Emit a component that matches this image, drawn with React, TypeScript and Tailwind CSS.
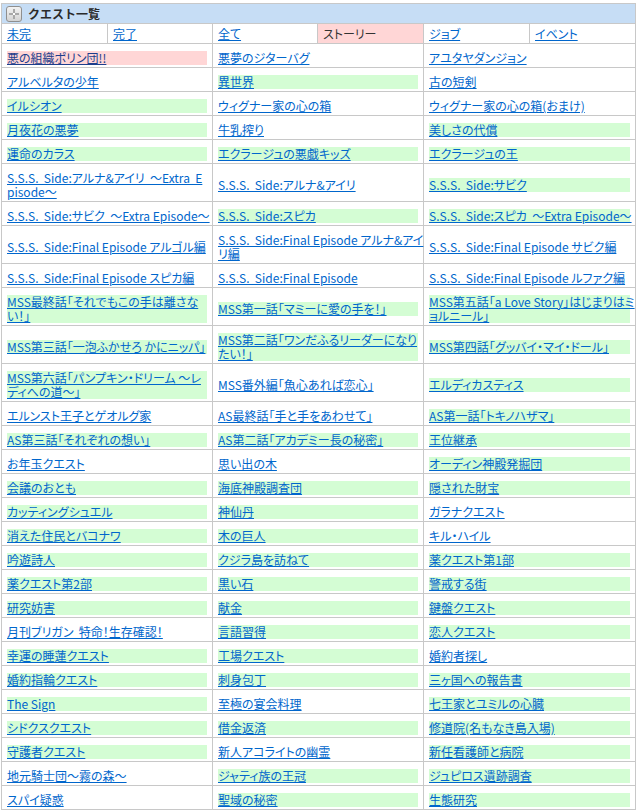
import React from "react";

type Cell = [string, "" | "g" | "p"];

const rows: Cell[][] = [
  [["悪の組織ポリン団!!", "p"], ["悪夢のジターバグ", ""], ["アユタヤダンジョン", ""]],
  [["アルベルタの少年", ""], ["異世界", "g"], ["古の短剣", ""]],
  [["イルシオン", "g"], ["ウィグナー家の心の箱", ""], ["ウィグナー家の心の箱(おまけ)", ""]],
  [["月夜花の悪夢", "g"], ["牛乳搾り", ""], ["美しさの代償", "g"]],
  [["運命のカラス", "g"], ["エクラージュの悪戯キッズ", "g"], ["エクラージュの王", "g"]],
  [["S.S.S.  Side:アルナ&アイリ  ～Extra  E\npisode～", ""], ["S.S.S.  Side:アルナ&アイリ", ""], ["S.S.S.  Side:サビク", "g"]],
  [["S.S.S.  Side:サビク  ～Extra Episode～", ""], ["S.S.S.  Side:スピカ", "g"], ["S.S.S.  Side:スピカ  ～Extra Episode～", "g"]],
  [["S.S.S.  Side:Final Episode アルゴル編", ""], ["S.S.S.  Side:Final Episode アルナ&アイ\nリ編", ""], ["S.S.S.  Side:Final Episode サビク編", ""]],
  [["S.S.S.  Side:Final Episode スピカ編", ""], ["S.S.S.  Side:Final Episode", ""], ["S.S.S.  Side:Final Episode ルファク編", ""]],
  [["MSS最終話「それでもこの手は離さな\nい！」", "g"], ["MSS第一話「マミーに愛の手を！」", "g"], ["MSS第五話「a Love Story」はじまりはミ\nョルニール」", "g"]],
  [["MSS第三話「一泡ふかせろ かにニッパ」", "g"], ["MSS第二話「ワンだふるリーダーになり\nたい！」", "g"], ["MSS第四話「グッバイ・マイ・ドール」", "g"]],
  [["MSS第六話「パンプキン・ドリーム ～レ\nディへの道～」", "g"], ["MSS番外編「魚心あれば恋心」", ""], ["エルディカスティス", "g"]],
  [["エルンスト王子とゲオルグ家", ""], ["AS最終話「手と手をあわせて」", ""], ["AS第一話「トキノハザマ」", "g"]],
  [["AS第三話「それぞれの想い」", "g"], ["AS第二話「アカデミー長の秘密」", "g"], ["王位継承", "g"]],
  [["お年玉クエスト", ""], ["思い出の木", ""], ["オーディン神殿発掘団", "g"]],
  [["会議のおとも", "g"], ["海底神殿調査団", "g"], ["隠された財宝", "g"]],
  [["カッティングシュエル", "g"], ["神仙丹", "g"], ["ガラナクエスト", ""]],
  [["消えた住民とバコナワ", "g"], ["木の巨人", "g"], ["キル・ハイル", ""]],
  [["吟遊詩人", "g"], ["クジラ島を訪ねて", "g"], ["薬クエスト第1部", "g"]],
  [["薬クエスト第2部", "g"], ["黒い石", "g"], ["警戒する街", "g"]],
  [["研究妨害", "g"], ["献金", "g"], ["鍵盤クエスト", "g"]],
  [["月刊ブリガン  特命！生存確認！", ""], ["言語習得", "g"], ["恋人クエスト", "g"]],
  [["幸運の睡蓮クエスト", "g"], ["工場クエスト", "g"], ["婚約者探し", ""]],
  [["婚約指輪クエスト", "g"], ["刺身包丁", "g"], ["三ヶ国への報告書", "g"]],
  [["The Sign", "g"], ["至極の宴会料理", ""], ["七王家とユミルの心臓", "g"]],
  [["シドクスクエスト", "g"], ["借金返済", "g"], ["修道院(名もなき島入場)", "g"]],
  [["守護者クエスト", "g"], ["新人アコライトの幽霊", ""], ["新任看護師と病院", "g"]],
  [["地元騎士団～霧の森～", ""], ["ジャティ族の王冠", "g"], ["ジュピロス遺跡調査", "g"]],
  [["スパイ疑惑", ""], ["聖域の秘密", "g"], ["生態研究", "g"]],
];

const tabs = ["未完", "完了", "全て", "ストーリー", "ジョブ", "イベント"];

function Icon() {
  return (
    <svg width="16" height="16" viewBox="0 0 16 16">
      <defs>
        <linearGradient id="ig" x1="0" y1="0" x2="0" y2="1">
          <stop offset="0" stopColor="#f4f4f4" />
          <stop offset="1" stopColor="#d2d2d2" />
        </linearGradient>
      </defs>
      <rect x="0.5" y="0.5" width="15" height="15" rx="2.5" fill="url(#ig)" stroke="#8f8f8f" />
      <rect x="7" y="3" width="2" height="10" fill="#a8a8a8" />
      <rect x="3" y="7" width="10" height="2" fill="#a8a8a8" />
      <rect x="7" y="7" width="2" height="2" fill="#ffffff" />
    </svg>
  );
}

function Entry({ text, kind }: { text: string; kind: "" | "g" | "p" }) {
  const lines = text.split("\n");
  const bg = kind === "g" ? "bg-[#d4fdd4]" : kind === "p" ? "bg-[#ffd6d6]" : "";
  const color = kind === "p" ? "text-[#1d3e8c]" : "text-[#0066cc]";
  return (
    <div className={`leading-[14px] whitespace-pre ${bg}`}>
      <a href="#" className={`underline ${color}`}>
        {lines.map((l, i) => (
          <React.Fragment key={i}>
            {i > 0 && <br />}
            {l}
          </React.Fragment>
        ))}
      </a>
    </div>
  );
}

export default function App() {
  return (
    <div className="bg-white min-h-[812px] pt-[3px] pl-[1px] font-['Noto_Sans_CJK_JP',sans-serif] text-[12px] [font-feature-settings:'palt']">
      <table className="w-[634px] table-fixed border-collapse">
        <colgroup>
          <col className="w-[106px]" />
          <col className="w-[105px]" />
          <col className="w-[105px]" />
          <col className="w-[106px]" />
          <col className="w-[106px]" />
          <col className="w-[106px]" />
        </colgroup>
        <tbody>
          <tr>
            <td colSpan={6} className="border border-[#c8c8c8] bg-[#c6ddf5] p-0 h-[20px]">
              <div className="flex items-center h-[19px] pl-[4px] gap-[6px]">
                <Icon />
                <span className="font-bold text-[#2a2a2a] text-[12px] [font-feature-settings:normal]">クエスト一覧</span>
              </div>
            </td>
          </tr>
          <tr>
            {tabs.map((t) => (
              <td
                key={t}
                className={`border border-[#c8c8c8] px-[5px] py-0 h-[20px] leading-[19px] ${
                  t === "ストーリー" ? "bg-[#ffd6d6] text-[#333333]" : ""
                }`}
              >
                {t === "ストーリー" ? (
                  <span>{t}</span>
                ) : (
                  <a href="#" className="underline text-[#0066cc]">
                    {t}
                  </a>
                )}
              </td>
            ))}
          </tr>
          {rows.map((r, i) => (
            <tr key={i}>
              {r.map(([text, kind], j) => (
                <td
                  key={j}
                  colSpan={2}
                  className="border border-[#c8c8c8] pl-[5px] pr-[5px] pt-[7px] pb-[2px] align-middle"
                >
                  <Entry text={text} kind={kind} />
                </td>
              ))}
            </tr>
          ))}
        </tbody>
      </table>
    </div>
  );
}
